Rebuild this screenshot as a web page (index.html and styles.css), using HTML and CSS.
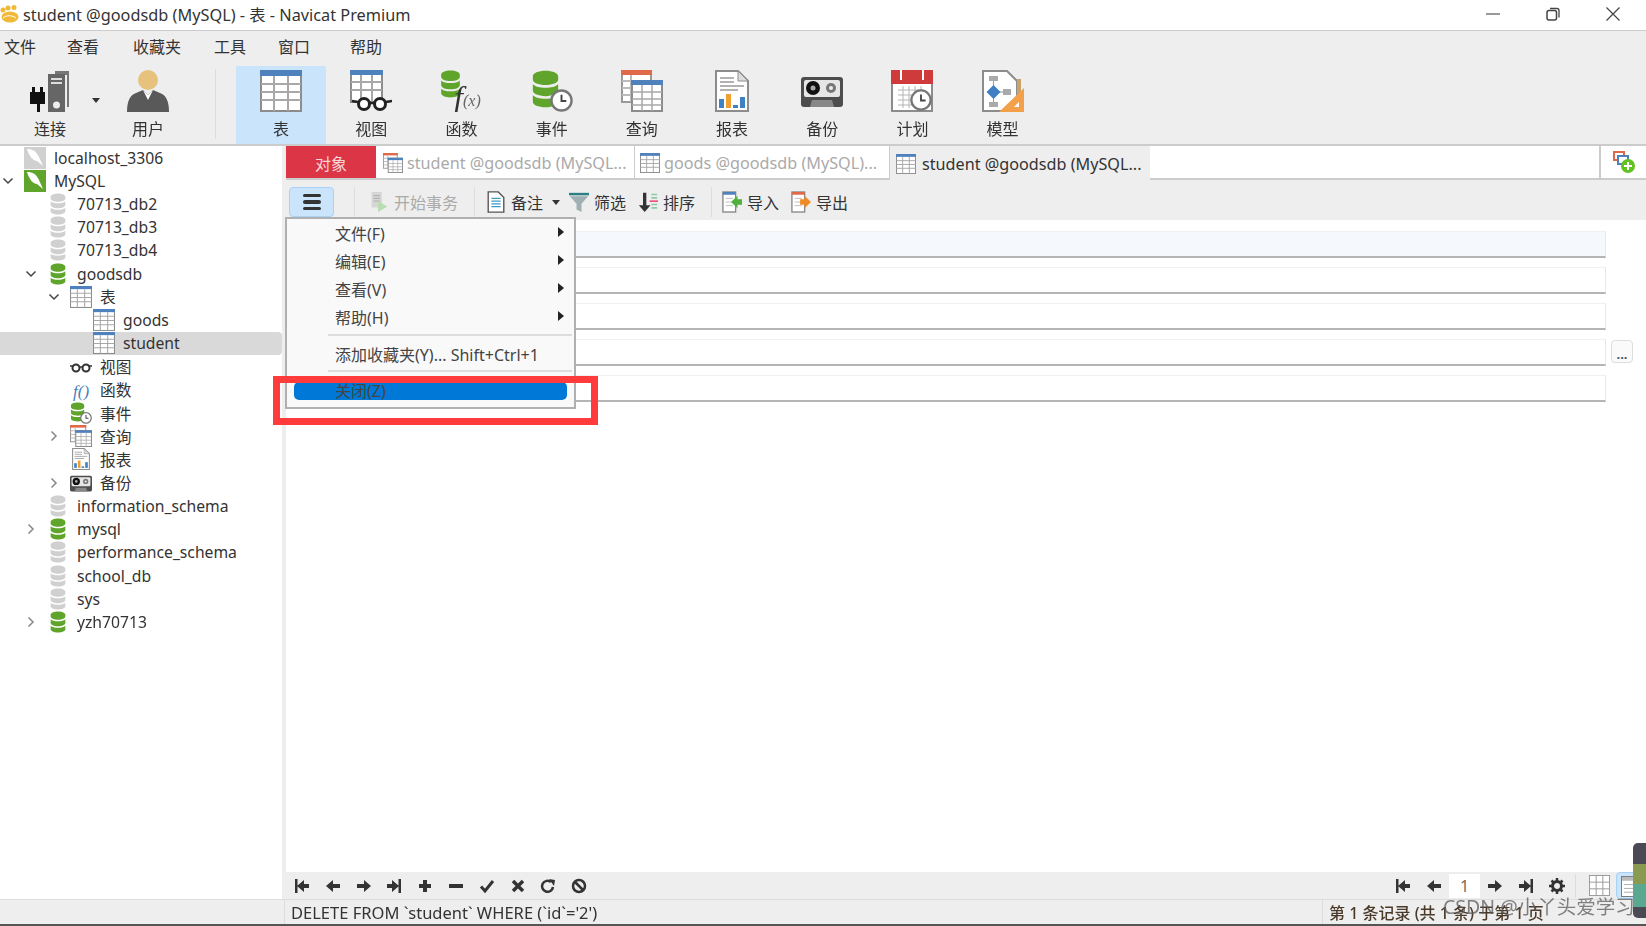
FILE: index.html
```html
<!DOCTYPE html>
<html lang="zh">
<head>
<meta charset="utf-8">
<title>student @goodsdb (MySQL) - 表 - Navicat Premium</title>
<link rel="stylesheet" href="styles.css">
</head>
<body>
<svg class="sprite" aria-hidden="true">
  <symbol id="db" viewBox="0 0 18 24"><path fill="currentColor" d="M1 4c0-2 3.500-3.500 8-3.500S17 2 17 4v2c0 2-3.500 3.500-8 3.500S1 8 1 6zM1 9c1.500 1.500 4.500 2.200 8 2.200S15.500 10.500 17 9v4c0 2-3.500 3.500-8 3.500S1 15 1 13zM1 16c1.500 1.500 4.500 2.200 8 2.200s6.500-.7 8-2.200v4c0 2-3.500 3.500-8 3.500S1 22 1 20z"/></symbol>
  <symbol id="tbl" viewBox="0 0 42 42"><rect x="1" y="1" width="40" height="40" fill="#fff" stroke="#8c8c8c" stroke-width="2"/><rect width="42" height="6" fill="#4f81bd"/><path d="M1 14h40M1 22h40M1 30h40M14 6v35M28 6v35" stroke="#a8a8a8" stroke-width="2"/></symbol>
  <symbol id="conn" viewBox="0 0 42 42"><path fill="#777" d="M24 5h14v32h2V1H26v4z"/><rect x="19" y="4" width="17" height="38" fill="#666"/><rect x="22" y="8" width="11" height="2" fill="#ddd"/><rect x="22" y="12" width="11" height="2" fill="#ddd"/><circle cx="27.500" cy="35" r="3.500" fill="#eee"/><path fill="#111" d="M3 17h3v5h5v-5h3v5h2v12h-5v8H8v-8H1V22h2z"/></symbol>
  <symbol id="user" viewBox="0 0 42 42"><circle cx="21" cy="10" r="10" fill="#e6c27c"/><path fill="#595959" d="M0 42c0-11 3-17 9-19l7-3 5 5 5-5 7 3c6 2 9 8 9 19z"/><path fill="#fff" d="M16 20l5 5 5-5-5 10z"/></symbol>
  <symbol id="view" viewBox="0 0 42 42"><rect x="1" y="1" width="31" height="31" fill="#fff" stroke="#8c8c8c" stroke-width="2"/><rect width="33" height="5" fill="#4f81bd"/><path d="M1 12h31M1 20h31M11 5v27M22 5v27" stroke="#a8a8a8" stroke-width="2"/><circle cx="14" cy="34" r="5.500" fill="#fff" stroke="#222" stroke-width="3"/><circle cx="30" cy="34" r="5.500" fill="#fff" stroke="#222" stroke-width="3"/><path d="M2 31l6 1M19 33h6M36 32l6-1" stroke="#222" stroke-width="2.500"/></symbol>
  <symbol id="clock" viewBox="0 0 24 24"><circle cx="12" cy="12" r="10.500" fill="#fff" stroke="#777" stroke-width="2.500"/><path d="M12 6v6.500h5" fill="none" stroke="#444" stroke-width="2"/></symbol>
  <symbol id="event" viewBox="0 0 42 42"><use href="#db" width="29" height="38" class="green"/><use href="#clock" x="19" y="19" width="23" height="23"/></symbol>
  <symbol id="query" viewBox="0 0 42 42"><rect x="1" y="1" width="29" height="31" fill="#fff" stroke="#999" stroke-width="2"/><rect width="31" height="5" fill="#e0694a"/><path d="M1 11h29M1 18h29M1 25h29M10 5v27" stroke="#bbb" stroke-width="2"/><rect x="11" y="11" width="30" height="30" fill="#fff" stroke="#8c8c8c" stroke-width="2"/><rect x="10" y="10" width="32" height="5" fill="#4f81bd"/><path d="M11 22h30M11 29h30M11 35h30M21 15v26M31 15v26" stroke="#a8a8a8" stroke-width="1.500"/></symbol>
  <symbol id="report" viewBox="0 0 42 42"><path fill="#fff" stroke="#8c8c8c" stroke-width="2" d="M5 1h22l10 10v30H5z"/><path fill="#ddd" stroke="#8c8c8c" d="M27 1v10h10z"/><path d="M9 8h14M9 12h14M9 16h24M9 20h18" stroke="#999" stroke-width="1.500"/><rect x="8" y="29" width="5" height="9" fill="#3f82c4"/><rect x="15" y="24" width="5" height="14" fill="#f0a030"/><rect x="22" y="35" width="5" height="3" fill="#3f82c4"/><rect x="29" y="27" width="5" height="11" fill="#3f82c4"/></symbol>
  <symbol id="backup" viewBox="0 0 42 42"><path fill="#4d4d4d" d="M3 7h36a3 3 0 0 1 3 3v24a3 3 0 0 1-3 3H3a3 3 0 0 1-3-3V10a3 3 0 0 1 3-3z"/><rect x="3" y="10" width="36" height="17" rx="2" fill="#e6e6e6"/><circle cx="12" cy="18" r="7" fill="#111"/><circle cx="12" cy="18" r="2.500" fill="#aaa"/><circle cx="30" cy="18" r="5" fill="#777"/><circle cx="30" cy="18" r="2" fill="#eee"/><path d="M9 37l2-7h20l2 7z" fill="#888"/></symbol>
  <symbol id="plan" viewBox="0 0 42 42"><rect x="1" y="2" width="40" height="39" fill="#fff" stroke="#8c8c8c" stroke-width="2"/><rect width="42" height="14" fill="#cf3a3a"/><path d="M10 0v10M32 0v10" stroke="#fff" stroke-width="2"/><path d="M7 20h26M7 25h26M7 30h26M7 35h26M12 16v22M18 16v22M24 16v22M30 16v22" stroke="#b5b5b5"/><use href="#clock" x="19" y="19" width="22" height="22"/></symbol>
  <symbol id="model" viewBox="0 0 42 42"><path fill="#fff" stroke="#8c8c8c" stroke-width="2" d="M1 1h24l10 10v30H1z"/><rect x="7" y="6" width="9" height="5" fill="#aaa"/><rect x="7" y="32" width="9" height="5" fill="#aaa"/><rect x="21" y="19" width="8" height="6" fill="#aaa"/><path d="M11.500 11v21M16 22h6" stroke="#999"/><path d="M11.500 15l7 7-7 7-7-7z" fill="#3f7fc4"/><rect x="35" y="9" width="4" height="18" fill="#c9a36a"/><path d="M42 18v24H17z" fill="#f2a04a"/><path d="M37 32v5h-5z" fill="#fff"/></symbol>
  <symbol id="doc" viewBox="0 0 20 24"><path fill="#fff" stroke="#555" stroke-width="1.500" d="M1.500 1h11l6 6v16h-17z"/><path d="M5 8h10M5 11h10M5 14h10M5 17h10" stroke="#3b9bc8" stroke-width="1.500"/></symbol>
  <symbol id="tx" viewBox="0 0 20 24"><rect x="2" y="1" width="11" height="17" fill="#d6d6d6"/><path d="M4 5h7M4 8h7M4 11h7" stroke="#aaa"/><path d="M9 11l10 6-10 6z" fill="#b9dcb0"/></symbol>
  <symbol id="funnel" viewBox="0 0 24 24"><rect x="0" y="1" width="24" height="3" fill="#2e7f84"/><path d="M1 5h22l-8 9v10l-6-3v-7z" fill="#9fb0b2"/></symbol>
  <symbol id="sort" viewBox="0 0 24 24"><path fill="#333" d="M6 1h4v15h5l-7 8-7-8h5z"/><path d="M16 3h7M16 7h7M16 15h7M16 19h7" stroke="#8ec9a8" stroke-width="2"/><path d="M14 11h10" stroke="#f0507a" stroke-width="2"/></symbol>
  <symbol id="imp" viewBox="0 0 22 24"><rect x="1" y="1" width="14" height="22" fill="#fff" stroke="#888" stroke-width="1.500"/><rect x="1" y="1" width="14" height="3" fill="#4f81bd"/><path d="M4 8h8M4 12h8M4 16h8" stroke="#bbb"/><path d="M10 12l7-7v4h5v6h-5v4z" fill="#4fb03c"/></symbol>
  <symbol id="exp" viewBox="0 0 22 24"><rect x="1" y="1" width="14" height="22" fill="#fff" stroke="#888" stroke-width="1.500"/><rect x="1" y="1" width="14" height="3" fill="#e0694a"/><path d="M4 8h8M4 12h8M4 16h8" stroke="#bbb"/><path d="M22 12l-7-7v4h-5v6h5v4z" fill="#f08a24"/></symbol>
  <symbol id="first" viewBox="0 0 16 16"><path fill="#333" d="M1 1h2.500v14H1zM3 8l7-6v4h5v4h-5v4z"/></symbol>
  <symbol id="prev" viewBox="0 0 16 16"><path fill="#333" d="M1 8l7-6v4h7v4H8v4z"/></symbol>
  <symbol id="next" viewBox="0 0 16 16"><path fill="#333" d="M15 8L8 2v4H1v4h7v4z"/></symbol>
  <symbol id="last" viewBox="0 0 16 16"><path fill="#333" d="M15 1h-2.500v14H15zM13 8L6 2v4H1v4h5v4z"/></symbol>
  <symbol id="plus" viewBox="0 0 16 16"><path fill="#333" d="M6 2h4v4h4v4h-4v4H6v-4H2V6h4z"/></symbol>
  <symbol id="minus" viewBox="0 0 16 16"><rect x="1" y="6" width="14" height="4" fill="#333"/></symbol>
  <symbol id="check" viewBox="0 0 16 16"><path d="M2 8.500l4 4.500 8-10" fill="none" stroke="#333" stroke-width="3"/></symbol>
  <symbol id="cross" viewBox="0 0 16 16"><path d="M3 3l10 10M13 3L3 13" stroke="#333" stroke-width="3.500"/></symbol>
  <symbol id="redo" viewBox="0 0 16 16"><path d="M13 9a5.500 5.500 0 1 1-2-5" fill="none" stroke="#333" stroke-width="2.500"/><path fill="#333" d="M9 1l6 1-1 6z"/></symbol>
  <symbol id="stop" viewBox="0 0 16 16"><circle cx="8" cy="8" r="6" fill="none" stroke="#333" stroke-width="2.500"/><path d="M4 4l8 8" stroke="#333" stroke-width="2.500"/></symbol>
  <symbol id="gear" viewBox="0 0 16 16"><circle cx="8" cy="8" r="4.500" fill="none" stroke="#333" stroke-width="3"/><path d="M8 0v3M8 13v3M0 8h3M13 8h3M2.500 2.500l2 2M11.500 11.500l2 2M13.500 2.500l-2 2M4.500 11.500l-2 2" stroke="#333" stroke-width="2.500"/></symbol>
  <symbol id="grid" viewBox="0 0 22 22"><rect x=".5" y=".5" width="21" height="21" fill="#fff" stroke="#999"/><path d="M.5 7.500h21M.5 14.500h21M7.500 .5v21M14.500 .5v21" stroke="#999"/></symbol>
  <symbol id="form" viewBox="0 0 22 22"><rect x=".5" y=".5" width="21" height="21" fill="#fff" stroke="#777"/><rect x="1" y="1" width="20" height="4" fill="#bbb"/><path d="M3 9h16M3 13h16M3 17h16" stroke="#aaa"/></symbol>
  <symbol id="leaf" viewBox="0 0 22 22"><rect width="22" height="22" fill="currentColor"/><path fill="#fff" d="M3 2c6 0 9 2 12 8l4 9-6-5c-4 0-8-5-10-12z"/></symbol>
  <symbol id="glasses" viewBox="0 0 22 12"><circle cx="6" cy="7" r="3.500" fill="none" stroke="#333" stroke-width="2"/><circle cx="16" cy="7" r="3.500" fill="none" stroke="#333" stroke-width="2"/><path d="M0 5l3 0M9 6h4M19 5l3 0" stroke="#333" stroke-width="1.500"/></symbol>
  <symbol id="add" viewBox="0 0 22 22"><rect x="1" y="1" width="10" height="8" fill="#fff" stroke="#e0694a" stroke-width="2"/><rect x="5" y="5" width="10" height="8" fill="#fff" stroke="#4f81bd" stroke-width="2"/><circle cx="15" cy="15" r="7" fill="#62c224"/><path d="M15 11v8M11 15h8" stroke="#fff" stroke-width="2"/></symbol>
  <symbol id="down" viewBox="0 0 12 12"><path d="M1.500 3.500L6 8l4.500-4.500" fill="none" stroke="#444" stroke-width="1.500"/></symbol>
  <symbol id="right" viewBox="0 0 12 12"><path d="M3.500 1.500L8 6l-4.500 4.500" fill="none" stroke="#888" stroke-width="1.500"/></symbol>
  <symbol id="logo" viewBox="0 0 20 18"><ellipse cx="10" cy="12" rx="8.500" ry="5.500" fill="#f0b93a"/><circle cx="3" cy="5" r="2.500" fill="#f0b93a"/><circle cx="8" cy="3" r="2.500" fill="#f0b93a"/><circle cx="14" cy="2.500" r="2.500" fill="#f0b93a"/><path d="M3 13c3-3 9-3 13 0" stroke="#fff" fill="none"/></symbol>
</svg>

<div class="app">
  <header class="titlebar">
    <svg class="logo"><use href="#logo"/></svg>
    <span class="title-text">student @goodsdb (MySQL) - 表 - Navicat Premium</span>
    <div class="winctl">
      <svg class="winbtn" viewBox="0 0 16 16"><path d="M1 8h14" stroke="#555" stroke-width="1.200"/></svg>
      <svg class="winbtn" viewBox="0 0 16 16"><rect x="2" y="4.500" width="9.500" height="9.500" rx="2" fill="none" stroke="#444" stroke-width="1.500"/><path d="M5 2.500h7a2 2 0 0 1 2 2v7" fill="none" stroke="#444" stroke-width="1.300"/></svg>
      <svg class="winbtn" viewBox="0 0 16 16"><path d="M1.500 1.500l13 13M14.500 1.500l-13 13" stroke="#444" stroke-width="1.200"/></svg>
    </div>
  </header>

  <nav class="menubar">
    <span>文件</span><span>查看</span><span>收藏夹</span><span>工具</span><span>窗口</span><span>帮助</span>
  </nav>

  <section class="ribbon">
    <div class="rbtn rbtn-first"><svg class="ricon"><use href="#conn"/></svg><span>连接</span><i class="caret caret-conn"></i></div>
    <div class="rbtn rbtn-user"><svg class="ricon"><use href="#user"/></svg><span>用户</span></div>
    <div class="rsep"></div>
    <div class="rbtn rbtn-on"><svg class="ricon"><use href="#tbl"/></svg><span>表</span></div>
    <div class="rbtn"><svg class="ricon"><use href="#view"/></svg><span>视图</span></div>
    <div class="rbtn"><svg class="ricon" viewBox="0 0 42 42"><use href="#db" width="21" height="28" class="green"/><text x="14" y="38" class="fx">f</text><text x="23" y="36" class="fx-sm">(x)</text></svg><span>函数</span></div>
    <div class="rbtn"><svg class="ricon"><use href="#event"/></svg><span>事件</span></div>
    <div class="rbtn"><svg class="ricon"><use href="#query"/></svg><span>查询</span></div>
    <div class="rbtn"><svg class="ricon"><use href="#report"/></svg><span>报表</span></div>
    <div class="rbtn"><svg class="ricon"><use href="#backup"/></svg><span>备份</span></div>
    <div class="rbtn"><svg class="ricon"><use href="#plan"/></svg><span>计划</span></div>
    <div class="rbtn"><svg class="ricon"><use href="#model"/></svg><span>模型</span></div>
  </section>

  <div class="workspace">
    <aside class="tree">
      <div class="node"><span class="tw"></span><svg class="ti gray"><use href="#leaf"/></svg><span>localhost_3306</span></div>
      <div class="node"><svg class="tw"><use href="#down"/></svg><svg class="ti green"><use href="#leaf"/></svg><span>MySQL</span></div>
      <div class="node l1"><span class="tw"></span><svg class="ti db gray"><use href="#db"/></svg><span>70713_db2</span></div>
      <div class="node l1"><span class="tw"></span><svg class="ti db gray"><use href="#db"/></svg><span>70713_db3</span></div>
      <div class="node l1"><span class="tw"></span><svg class="ti db gray"><use href="#db"/></svg><span>70713_db4</span></div>
      <div class="node l1"><svg class="tw"><use href="#down"/></svg><svg class="ti db green"><use href="#db"/></svg><span>goodsdb</span></div>
      <div class="node l2"><svg class="tw"><use href="#down"/></svg><svg class="ti"><use href="#tbl"/></svg><span>表</span></div>
      <div class="node l3"><span class="tw"></span><svg class="ti"><use href="#tbl"/></svg><span>goods</span></div>
      <div class="node l3 node-on"><span class="tw"></span><svg class="ti"><use href="#tbl"/></svg><span>student</span></div>
      <div class="node l2"><span class="tw"></span><svg class="ti"><use href="#glasses"/></svg><span>视图</span></div>
      <div class="node l2"><span class="tw"></span><svg class="ti" viewBox="0 0 22 22"><text x="3" y="18" class="fn-text">f()</text></svg><span>函数</span></div>
      <div class="node l2"><span class="tw"></span><svg class="ti"><use href="#event"/></svg><span>事件</span></div>
      <div class="node l2"><svg class="tw"><use href="#right"/></svg><svg class="ti"><use href="#query"/></svg><span>查询</span></div>
      <div class="node l2"><span class="tw"></span><svg class="ti"><use href="#report"/></svg><span>报表</span></div>
      <div class="node l2"><svg class="tw"><use href="#right"/></svg><svg class="ti"><use href="#backup"/></svg><span>备份</span></div>
      <div class="node l1"><span class="tw"></span><svg class="ti db gray"><use href="#db"/></svg><span>information_schema</span></div>
      <div class="node l1"><svg class="tw"><use href="#right"/></svg><svg class="ti db green"><use href="#db"/></svg><span>mysql</span></div>
      <div class="node l1"><span class="tw"></span><svg class="ti db gray"><use href="#db"/></svg><span>performance_schema</span></div>
      <div class="node l1"><span class="tw"></span><svg class="ti db gray"><use href="#db"/></svg><span>school_db</span></div>
      <div class="node l1"><span class="tw"></span><svg class="ti db gray"><use href="#db"/></svg><span>sys</span></div>
      <div class="node l1"><svg class="tw"><use href="#right"/></svg><svg class="ti db green"><use href="#db"/></svg><span>yzh70713</span></div>
    </aside>

    <main class="pane">
      <div class="tabs">
        <div class="tab tab-obj">对象</div>
        <div class="tab tab-a"><svg class="tabicon"><use href="#query"/></svg><span>student @goodsdb (MySQL...</span></div>
        <div class="tab tab-b"><svg class="tabicon"><use href="#tbl"/></svg><span>goods @goodsdb (MySQL)...</span></div>
        <div class="tab tab-c"><svg class="tabicon"><use href="#tbl"/></svg><span>student @goodsdb (MySQL...</span></div>
        <div class="tab-fill"></div>
        <div class="tab-add"><svg class="addicon"><use href="#add"/></svg></div>
      </div>

      <div class="objbar">
        <button class="ham" type="button" aria-label="菜单"><i></i><i></i><i></i></button>
        <div class="osep osep-1"></div>
        <div class="tool tool-tx"><svg class="ticon"><use href="#tx"/></svg><span>开始事务</span></div>
        <div class="osep osep-2"></div>
        <div class="tool tool-note"><svg class="ticon"><use href="#doc"/></svg><span>备注</span><i class="caret"></i></div>
        <div class="tool"><svg class="ticon"><use href="#funnel"/></svg><span>筛选</span></div>
        <div class="tool tool-sort"><svg class="ticon"><use href="#sort"/></svg><span>排序</span></div>
        <div class="osep osep-3"></div>
        <div class="tool"><svg class="ticon"><use href="#imp"/></svg><span>导入</span></div>
        <div class="tool"><svg class="ticon"><use href="#exp"/></svg><span>导出</span></div>
      </div>

      <div class="form">
        <div class="frow"><div class="field field-on"></div></div>
        <div class="frow"><div class="field"></div></div>
        <div class="frow"><div class="field"></div></div>
        <div class="frow"><div class="field"></div><button class="more" type="button">...</button></div>
        <div class="frow"><div class="field"></div></div>
      </div>

      <div class="navbar">
        <svg class="nav"><use href="#first"/></svg>
        <svg class="nav"><use href="#prev"/></svg>
        <svg class="nav"><use href="#next"/></svg>
        <svg class="nav"><use href="#last"/></svg>
        <svg class="nav"><use href="#plus"/></svg>
        <svg class="nav"><use href="#minus"/></svg>
        <svg class="nav"><use href="#check"/></svg>
        <svg class="nav"><use href="#cross"/></svg>
        <svg class="nav"><use href="#redo"/></svg>
        <svg class="nav"><use href="#stop"/></svg>
        <div class="pager">
          <svg class="nav"><use href="#first"/></svg>
          <svg class="nav"><use href="#prev"/></svg>
          <span class="page-no">1</span>
          <svg class="nav"><use href="#next"/></svg>
          <svg class="nav"><use href="#last"/></svg>
          <svg class="nav"><use href="#gear"/></svg>
          <div class="psep"></div>
          <svg class="vw"><use href="#grid"/></svg>
          <span class="vw-on"><svg class="vw"><use href="#form"/></svg></span>
        </div>
      </div>

      <div class="popup">
        <div class="mi"><span>文件(F)</span><i class="sub"></i></div>
        <div class="mi"><span>编辑(E)</span><i class="sub"></i></div>
        <div class="mi"><span>查看(V)</span><i class="sub"></i></div>
        <div class="mi"><span>帮助(H)</span><i class="sub"></i></div>
        <div class="msep"></div>
        <div class="mi"><span>添加收藏夹(Y)... Shift+Ctrl+1</span></div>
        <div class="msep msep-2"></div>
        <div class="mi mi-on"><span>关闭(Z)</span></div>
      </div>
      <div class="redbox"></div>
    </main>
  </div>

  <footer class="status">
    <div class="st-left"></div>
    <div class="st-sql">DELETE FROM `student` WHERE (`id`='2')</div>
    <div class="st-rec">第 1 条记录 (共 1 条) 于第 1 页</div>
  </footer>

  <div class="meter"></div>
  <div class="watermark">CSDN @小丫头爱学习</div>
</div>
</body>
</html>
```
FILE: styles.css
```css
* { box-sizing: border-box; }
html, body { margin: 0; padding: 0; height: 100%; overflow: hidden; background: #fff; }
body { font-family: "Noto Sans", "Noto Sans CJK SC", sans-serif; font-size: 16px; color: #333; }
.sprite { position: absolute; width: 0; height: 0; overflow: hidden; }
.green { color: #5fa52c; }
.gray { color: #d0d0d0; }
svg { display: block; flex: none; }
.fx { font: italic 32px "Liberation Serif", serif; fill: #333; }
.fx-sm { font: italic 16px "Liberation Serif", serif; fill: #666; }
.fn-text { font: italic 17px "Liberation Serif", serif; fill: #4a7fb5; }

.app { position: relative; width: 1646px; height: 926px; display: flex; flex-direction: column; overflow: hidden; filter: blur(.45px); }

.titlebar { height: 31px; flex: none; display: flex; align-items: center; padding-bottom: 2px; background: #fff; border-bottom: 1px solid #ccc; }
.logo { width: 20px; height: 18px; margin-right: 3px; }
.title-text { font-size: 16.300px; color: #333; white-space: nowrap; }
.winctl { margin-left: auto; display: flex; gap: 44px; padding-right: 25px; }
.winbtn { width: 16px; height: 16px; }

.menubar { height: 32px; flex: none; display: grid; grid-template-columns: 63px 66px 81px 64px 72px auto; align-items: center; padding: 0 0 2px 4px; background: #eee; }

.ribbon { height: 83px; flex: none; display: flex; padding: 3px 0 0 5px; background: #eee; border-bottom: 2px solid #ccc; }
.rbtn { position: relative; width: 90.200px; display: flex; flex-direction: column; align-items: center; padding-top: 4px; gap: 6px; }
.rbtn span { line-height: 22px; }
.ricon { width: 42px; height: 42px; }
.rbtn-first { width: 90px; }
.rbtn-user { margin-left: 8px; width: 90px; }
.rbtn-on { background: #c9e4fb; }
.rsep { width: 1px; height: 70px; margin: 3px 20px 0 22px; background: #ddd; }
.caret { display: block; width: 0; height: 0; border: 4px solid transparent; border-top: 5px solid #333; border-bottom: 0; }
.caret-conn { position: absolute; left: 87px; top: 32px; }

.workspace { flex: 1; min-height: 0; display: flex; }
.tree { width: 286px; flex: none; background: #fff; border-right: 4px solid #eee; font-size: 15.700px; }
.node { height: 23.220px; display: flex; align-items: center; white-space: nowrap; color: #333; }
.node.l1 { padding-left: 23px; }
.node.l2 { padding-left: 46px; }
.node.l3 { padding-left: 69px; }
.node-on { background: #d9d9d9; border-radius: 0 4px 4px 0; }
.tw { width: 16px; height: 12px; margin-right: 8px; }
.ti { width: 22px; height: 22px; margin-right: 8px; }
.ti.db { padding: 0 2px; }

.pane { position: relative; flex: 1; min-width: 0; display: flex; flex-direction: column; }
.tabs { height: 34px; flex: none; display: flex; align-items: stretch; background: #fff; border-bottom: 2px solid #ccc; }
.tab { display: flex; align-items: center; padding-top: 1px; white-space: nowrap; color: #aaa; font-size: 16.200px; }
.tab-obj { width: 90px; justify-content: center; background: #dc3545; color: #f5d5d5; font-size: 16px; }
.tabicon { width: 20px; height: 20px; margin-right: 4px; }
.tab-a { width: 259px; padding-left: 7px; border-right: 1px solid #ccc; }
.tab-b { width: 255px; padding-left: 5px; border-right: 1px solid #ccc; }
.tab-c { width: 260px; padding-left: 6px; background: #eee; color: #333; margin-bottom: -2px; }
.tab-c .tabicon { margin-right: 6px; }
.tab-fill { flex: 1; }
.tab-add { width: 47px; display: flex; align-items: center; justify-content: center; border-left: 2px solid #ccc; }
.addicon { width: 22px; height: 22px; }

.objbar { height: 40px; flex: none; display: flex; align-items: center; padding: 4px 0 0 3px; background: #eee; }
.ham { width: 45px; height: 30px; padding: 0; display: flex; flex-direction: column; align-items: center; justify-content: center; gap: 3px; background: #c9e4fb; border: 1px solid #a8d2f5; border-radius: 4px; }
.ham i { display: block; width: 18px; height: 3.500px; background: #333; border-radius: 2px; }
.osep { width: 1px; height: 30px; background: #ddd; }
.osep-1 { margin-left: 20px; margin-right: 14px; }
.osep-2 { margin-left: 16px; margin-right: 11px; }
.osep-3 { margin-left: 4px; margin-right: 10px; }
.tool { display: flex; align-items: center; gap: 5px; margin-right: 12px; white-space: nowrap; }
.ticon { width: 20px; height: 22px; }
.tool-tx { color: #aaa; margin-right: 0; }
.tool-note { margin-right: 9px; }
.tool-note .caret { margin-left: 4px; }

.form { flex: 1; min-height: 0; display: flex; flex-direction: column; gap: 9px; padding-top: 11px; background: #fff; }
.frow { display: grid; grid-template-columns: 1fr 22px; column-gap: 5px; height: 27px; padding: 0 13px 0 14px; }
.field { height: 27px; background: #fff; border-top: 1px solid #f0f0f0; border-left: 1px solid #f3f3f3; border-right: 1px solid #e8e8e8; border-bottom: 2px solid #b5b5b5; }
.field-on { background: #f5f9fe; }
.more { width: 22px; height: 23px; margin-top: 1px; padding: 0 0 2px; font: 700 13px "Noto Sans", sans-serif; line-height: 26px; color: #456; background: #fafafa; border: 1px solid #ddd; border-radius: 4px; }

.navbar { height: 27px; flex: none; display: flex; align-items: center; gap: 14.800px; padding-left: 8px; background: #eee; }
.nav { width: 16px; height: 16px; }
.pager { margin-left: auto; display: flex; align-items: center; gap: 15px; }
.page-no { width: 31px; height: 24px; margin: 0 -8px; text-align: center; line-height: 24px; color: #7a6a55; background: #fff; }
.psep { width: 1px; height: 24px; background: #ddd; margin: 0 -2px 0 -5px; }
.vw { width: 21px; height: 21px; }
.vw-on { display: block; width: 30px; height: 27px; margin-left: -9px; padding: 3px 0 0 4px; background: #c9e4fb; border: 1px solid #a8d2f5; border-radius: 4px 0 0 4px; }

.popup { position: absolute; left: -1px; top: 71px; width: 291px; height: 192px; background: #f9f9f9; border: 2px solid #b0b0b0; }
.mi { height: 28px; padding: 0 10px 0 48px; display: flex; align-items: center; justify-content: space-between; color: #444; white-space: nowrap; }
.sub { width: 0; height: 0; border: 5px solid transparent; border-left: 6px solid #222; border-right: 0; margin-top: -3px; }
.msep { height: 8.500px; margin: 0 2px 0 41px; background: linear-gradient(#ddd, #ddd) center / 100% 2px no-repeat; }
.msep-2 { height: 7px; }
.mi-on { height: 18px; margin: 7px 7px 0 7px; padding: 0 0 2px 41px; background: #0078d7; border-radius: 5px; }
.redbox { position: absolute; left: -13px; top: 230px; width: 325px; height: 49px; border: 7px solid #ff3b3b; }

.status { height: 27px; flex: none; display: flex; align-items: center; background: #eee; border-top: 1px solid #ddd; border-bottom: 2px solid #555; }
.st-left { width: 285px; height: 100%; border-right: 1px solid #ddd; }
.st-sql { flex: 1; padding: 1px 0 0 6px; font-size: 16.500px; color: #333; white-space: nowrap; }
.st-rec { width: 324px; height: 100%; padding-left: 6px; line-height: 27px; border-left: 1px solid #ddd; white-space: nowrap; color: #4a3a2a; font-weight: 500; }

.meter { position: absolute; left: 1633px; top: 843px; width: 13px; height: 75px; background: linear-gradient(#4a4a55 0 28%, #8a9a50 28% 55%, #5aa890 55% 85%, #4a4a55 85%); border-radius: 5px 0 0 5px; }
.watermark { position: absolute; left: 1443px; top: 897px; font-size: 19.500px; line-height: 20px; color: rgba(90, 90, 90, .75); white-space: nowrap; }
```
